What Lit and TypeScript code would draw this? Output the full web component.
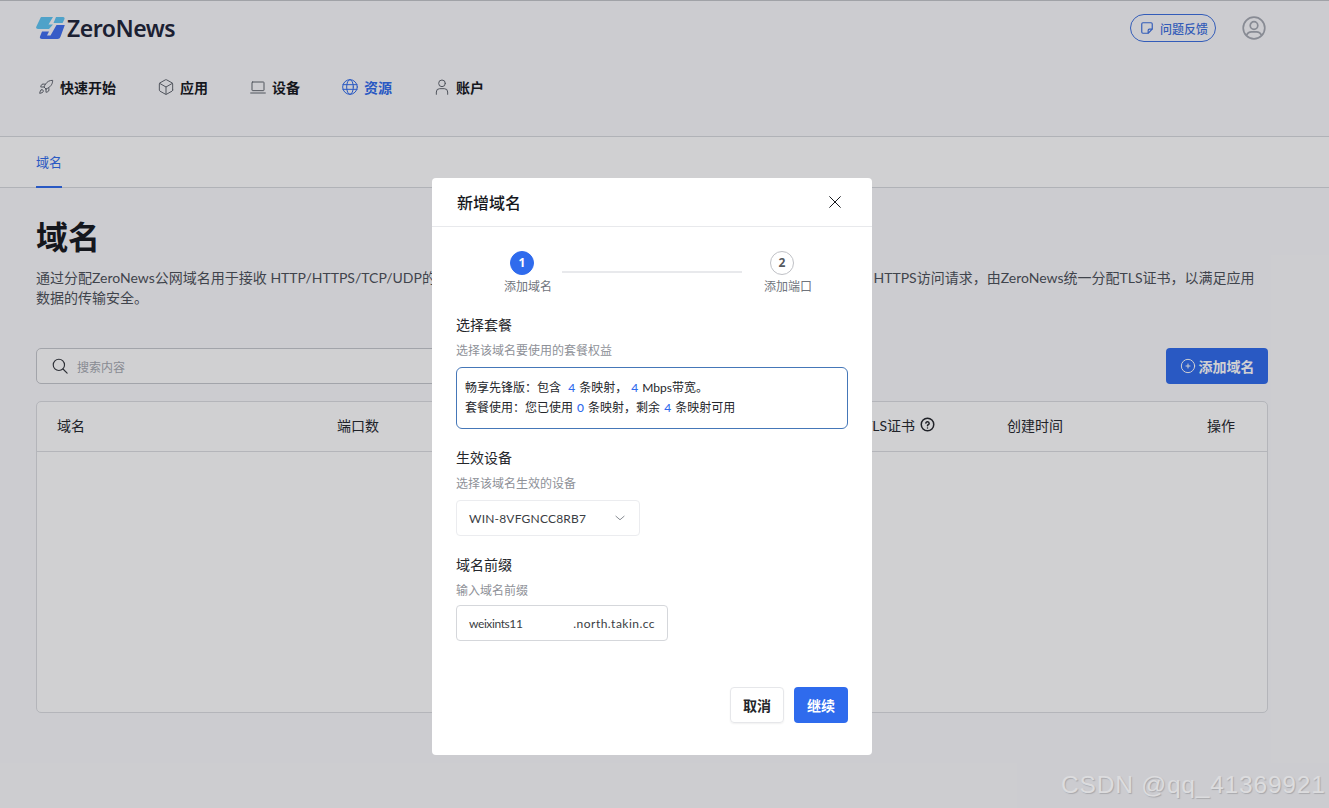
import { LitElement, html, css, svg } from "lit";
import { customElement } from "lit/decorators.js";

const icon = (size: number, body: unknown, cls = "") => html`<svg class=${cls} width=${size} height=${size} viewBox="0 0 24 24" fill="none" stroke="currentColor" stroke-width="1.5" stroke-linecap="round" stroke-linejoin="round">${body}</svg>`;

const rocket = svg`<path d="M4.5 16.5c-1.5 1.26-2 5-2 5s3.74-.5 5-2c.71-.84.7-2.13-.09-2.91a2.18 2.18 0 0 0-2.91-.09z"/><path d="m12 15-3-3a22 22 0 0 1 2-3.95A12.88 12.88 0 0 1 22 2c0 2.72-.78 7.5-6 11a22.35 22.35 0 0 1-4 2z"/><path d="M9 12H4s.55-3.03 2-4c1.62-1.08 5 0 5 0"/><path d="M12 15v5s3.03-.55 4-2c1.08-1.62 0-5 0-5"/>`;
const cube = svg`<path d="M22 16.5V7.5a2 2 0 0 0-1-1.73l-8-4.5a2 2 0 0 0-2 0l-8 4.5A2 2 0 0 0 2 7.5v9a2 2 0 0 0 1 1.73l8 4.5a2 2 0 0 0 2 0l8-4.5a2 2 0 0 0 1-1.73z"/><path d="M2.4 6.5 12 12l9.6-5.5"/><path d="M12 23V12"/>`;
const laptop = svg`<rect x="3" y="4.5" width="18" height="13" rx="1"/><path d="M1 21h22"/>`;
const globe = svg`<circle cx="12" cy="12" r="11"/><path d="M1.5 8.5h21M1.5 15.5h21"/><ellipse cx="12" cy="12" rx="5" ry="11"/>`;
const user = svg`<circle cx="12" cy="6.5" r="5"/><path d="M3.5 23v-3.5a5 5 0 0 1 5-5h7a5 5 0 0 1 5 5V23"/>`;

const nav = [
    { label: "快速开始", icon: rocket },
    { label: "应用", icon: cube },
    { label: "设备", icon: laptop },
    { label: "资源", icon: globe, active: true },
    { label: "账户", icon: user },
];

const columns = ["域名", "端口数", "生效设备", "TLS证书", "创建时间", "操作"];

@customElement("app-root")
class AppRoot extends LitElement {
    static styles = css`
        :host {
            display: block;
            position: relative;
            width: 1329px;
            height: 808px;
            overflow: hidden;
            background: #fbfbfd;
            color: #16181d;
            font-family: "Lato", "Noto Sans CJK SC", sans-serif;
        }
        header {
            border-top: 1px solid #c4c6ca;
            border-bottom: 1px solid #d8dade;
            height: 135px;
            padding: 0 0 0 36px;
            box-sizing: content-box;
        }
        .top {
            display: flex;
            align-items: center;
            justify-content: space-between;
            height: 54px;
            padding-right: 63px;
        }
        .logo {
            display: flex;
            align-items: center;
            gap: 2px;
            font-family: "Noto Sans", sans-serif;
            font-size: 23px;
            font-weight: 600;
            letter-spacing: -0.5px;
            color: #1d2438;
        }
        .tools {
            display: flex;
            align-items: center;
            gap: 26px;
        }
        .feedback {
            display: flex;
            align-items: center;
            gap: 6px;
            height: 26px;
            padding: 0 7px 0 9px;
            border: 1px solid #3b6fe0;
            border-radius: 14px;
            color: #3b6fe0;
            font-size: 12px;
            font-weight: 500;
        }
        .avatar {
            color: #a5a9b2;
        }
        nav {
            display: flex;
            gap: 42px;
            margin-top: 22px;
            padding-left: 2px;
        }
        .item {
            display: flex;
            align-items: center;
            gap: 6px;
            height: 20px;
            font-size: 14px;
            font-weight: 700;
        }
        .item svg {
            color: #5f646d;
        }
        .item.active,
        .item.active svg {
            color: #2f6bed;
        }
        .tabs {
            height: 50px;
            padding-left: 36px;
            background: #ffffff;
            border-bottom: 1px solid #d8dade;
        }
        .tab {
            display: inline-block;
            height: 49px;
            line-height: 50px;
            font-size: 13px;
            color: #2f6bed;
            border-bottom: 2px solid #2f6bed;
        }
        main {
            padding: 27px 0 0 36px;
            width: 1232px;
        }
        h1 {
            margin: 0;
            font-size: 32px;
            font-weight: 700;
            line-height: 44px;
        }
        .desc {
            margin: 9px 0 0;
            font-size: 14px;
            line-height: 20px;
            color: #4c5058;
        }
        .actions {
            display: flex;
            justify-content: space-between;
            margin-top: 40px;
        }
        .search {
            width: 560px;
            display: flex;
            align-items: center;
            gap: 8px;
            height: 34px;
            padding-left: 14px;
            background: #fff;
            border: 1px solid #c6c8cd;
            border-radius: 5px;
            font-size: 12px;
            color: #a6a9b0;
        }
        .search svg {
            color: #33363c;
        }
        .add {
            display: flex;
            align-items: center;
            justify-content: center;
            gap: 3px;
            width: 102px;
            height: 36px;
            background: #2f6bed;
            border-radius: 4px;
            color: #fff;
            font-size: 14px;
            font-weight: 700;
        }
        .table {
            margin-top: 17px;
            height: 310px;
            background: #fff;
            border: 1px solid #dcdee2;
            border-radius: 5px;
        }
        .thead {
            display: grid;
            grid-template-columns: 280px 265px 262px 143px 200px auto;
            align-items: center;
            height: 45px;
            padding: 0 0 4px 20px;
            border-bottom: 1px solid #dcdee2;
            font-size: 14px;
            color: #24262b;
        }
        .thead span {
            display: flex;
            align-items: center;
            gap: 5px;
        }
        .overlay {
            position: absolute;
            inset: 0;
            padding: 178px 25px 0 0;
            display: flex;
            justify-content: center;
            align-items: flex-start;
            background: rgba(20, 20, 30, 0.2);
        }
        .modal {
            width: 440px;
            height: 577px;
            box-sizing: border-box;
            background: #fff;
            border-radius: 4px;
        }
        .mhead {
            display: flex;
            align-items: center;
            justify-content: space-between;
            height: 48px;
            padding: 0 29px 0 25px;
            border-bottom: 1px solid #e8e9ec;
            font-size: 16px;
            font-weight: 500;
        }
        .mbody {
            padding: 0 24px;
        }
        .steps {
            display: grid;
            grid-template-columns: 48px 10px 180px 22px 48px;
            margin: 24px 0 0 48px;
            height: 46px;
        }
        .step {
            display: flex;
            flex-direction: column;
            align-items: center;
            font-size: 12px;
            line-height: 16px;
            color: #70747c;
            white-space: nowrap;
        }
        .dot {
            width: 24px;
            height: 24px;
            margin: 0 12px 4px 0;
            box-sizing: border-box;
            border-radius: 50%;
            border: 1px solid #bfc1c6;
            text-align: center;
            font-family: "Noto Sans", sans-serif;
            font-size: 12px;
            font-weight: 700;
            line-height: 22px;
            color: #55585e;
        }
        .dot.on {
            background: #2f6bed;
            border-color: #2f6bed;
            color: #fff;
        }
        .track {
            height: 2px;
            margin-top: 20px;
            background: #e8e9ec;
        }
        .label {
            font-size: 14px;
            line-height: 18px;
            color: #24262b;
        }
        .first {
            margin-top: 19px;
        }
        .hint {
            margin-top: 8px;
            font-size: 12px;
            line-height: 18px;
            color: #8e9198;
        }
        .plan {
            margin-top: 7px;
            height: 62px;
            box-sizing: border-box;
            padding: 10px 8px;
            border: 1px solid #4577b8;
            border-radius: 6px;
            font-size: 12px;
            line-height: 19.5px;
            color: #24262b;
        }
        .plan b {
            padding: 0 1px;
            font-weight: 500;
            color: #2f6bed;
        }
        .select,
        .input {
            display: flex;
            align-items: center;
            justify-content: space-between;
            height: 36px;
            box-sizing: border-box;
            padding: 0 12px;
            border-radius: 4px;
            font-size: 12px;
            color: #3a3d43;
        }
        .select {
            width: 184px;
            margin-top: 7px;
            border: 1px solid #ebecef;
            letter-spacing: 0.2px;
        }
        .select svg {
            color: #777b83;
        }
        .input {
            width: 212px;
            border: 1px solid #d5d7db;
            margin-top: 5px;
        }
        .prefix {
            letter-spacing: -0.4px;
        }
        .suffix {
            letter-spacing: 0.47px;
        }
        .gap1 {
            margin-top: 20px;
        }
        .gap2 {
            margin-top: 20px;
        }
        .foot {
            display: flex;
            justify-content: flex-end;
            gap: 10px;
            margin-top: 46px;
        }
        .btn {
            width: 54px;
            height: 36px;
            box-sizing: border-box;
            border-radius: 4px;
            display: flex;
            align-items: center;
            justify-content: center;
            font-size: 14px;
            font-weight: 700;
        }
        .btn.ghost {
            border: 1px solid #e6e7ea;
            box-shadow: 0 1px 2px rgba(0, 0, 0, 0.06);
            color: #24262b;
        }
        .btn.primary {
            background: #2f6bed;
            color: #fff;
        }
        .mark {
            position: absolute;
            left: 1061px;
            top: 771px;
            font-family: "Liberation Sans", sans-serif;
            font-size: 24.5px;
            letter-spacing: 0.8px;
            color: #dcdcde;
            text-shadow: 1px 1px 1px #a9a9ad;
            white-space: nowrap;
        }
    `;

    render() {
        return html`
            <header>
                <div class="top">
                    <div class="logo">
                        <svg width="29" height="22" viewBox="0 0 29 22">
                            <path d="M6 0H17L12.5 7.5H17L13 12H2C.4 12-.4 10.9.4 9.5L4.2 1.4C4.7.5 5 0 6 0z" fill="#5ec6f4" />
                            <path d="M20 0H27C28.4 0 29 1 28.4 2.2L26.6 6H17.5z" fill="#5ec6f4" />
                            <path d="M20.5 8H28.8L24.6 19.5C24 21.2 23 22 21.5 22H6C4.2 22 3.5 21 4 19.5L6 14.5H13L11 18.5H14.5z" fill="#3f6ff2" />
                        </svg>
                        ZeroNews
                    </div>
                    <div class="tools">
                        <div class="feedback">
                            <svg width="14" height="14" viewBox="0 0 24 24" fill="none" stroke="currentColor" stroke-width="2" stroke-linejoin="round"><path d="M5 3h14a2 2 0 0 1 2 2v9l-7 7H5a2 2 0 0 1-2-2V5a2 2 0 0 1 2-2z" /><path d="M21 14h-5a2 2 0 0 0-2 2v5" /></svg>
                            问题反馈
                        </div>
                        <svg class="avatar" width="24" height="24" viewBox="0 0 24 24" fill="none" stroke="currentColor" stroke-width="1.7"><circle cx="12" cy="12" r="10.8" /><circle cx="12" cy="9.5" r="3.8" /><path d="M4.5 19.5c1-2.5 3-3.6 5-3.6h5c2 0 4 1.1 5 3.6" /></svg>
                    </div>
                </div>
                <nav>
                    ${nav.map(
                        (n) => html`<div class="item ${n.active ? "active" : ""}">${icon(16, n.icon)}${n.label}</div>`
                    )}
                </nav>
            </header>
            <div class="tabs"><span class="tab">域名</span></div>
            <main>
                <h1>域名</h1>
                <p class="desc">
                    通过分配ZeroNews公网域名用于接收 HTTP/HTTPS/TCP/UDP的公网访问请求&#xFF0C;并将请求转发到指定的内网应用。绑定域名之后可启用 HTTPS访问请求&#xFF0C;由ZeroNews统一分配TLS证书&#xFF0C;以满足应用<br />数据的传输安全。
                </p>
                <div class="actions">
                    <div class="search">
                        ${icon(18, svg`<circle cx="10.5" cy="10.5" r="7.5" /><path d="m16 16 5.5 5.5" />`)}
                        搜索内容
                    </div>
                    <div class="add">
                        ${icon(16, svg`<circle cx="12" cy="12" r="10" /><path d="M12 9v6M9 12h6" />`)}
                        添加域名
                    </div>
                </div>
                <div class="table">
                    <div class="thead">
                        ${columns.map(
                            (c) => html`<span>${c}${c === "TLS证书"
                                ? html`<svg width="15" height="15" viewBox="0 0 24 24" fill="none" stroke="currentColor" stroke-width="2.4" stroke-linecap="round"><circle cx="12" cy="12" r="10" /><path d="M9.3 9.5a2.8 2.8 0 0 1 5.4.8c0 1.8-2.7 2.2-2.7 3.7" /><path d="M12 17.5v.1" /></svg>`
                                : ""}</span>`
                        )}
                    </div>
                </div>
            </main>
            <div class="overlay">
                <div class="modal">
                    <div class="mhead">
                        新增域名
                        ${icon(16, svg`<path d="M4 4l16 16M20 4 4 20" />`)}
                    </div>
                    <div class="mbody">
                        <div class="steps">
                            <div class="step"><div class="dot on">1</div><span>添加域名</span></div>
                            <div></div>
                            <div class="track"></div>
                            <div></div>
                            <div class="step"><div class="dot">2</div><span>添加端口</span></div>
                        </div>
                        <div class="label first">选择套餐</div>
                        <div class="hint">选择该域名要使用的套餐权益</div>
                        <div class="plan">
                            <div>畅享先锋版&#xFF1A;包含&nbsp; <b>4</b> 条映射&#xFF0C; <b>4</b> Mbps带宽。</div>
                            <div>套餐使用&#xFF1A;您已使用 <b>0</b> 条映射&#xFF0C;剩余 <b>4</b> 条映射可用</div>
                        </div>
                        <div class="label gap1">生效设备</div>
                        <div class="hint">选择该域名生效的设备</div>
                        <div class="select">
                            WIN-8VFGNCC8RB7
                            ${icon(14, svg`<path d="m5 9 7 6 7-6" />`)}
                        </div>
                        <div class="label gap2">域名前缀</div>
                        <div class="hint">输入域名前缀</div>
                        <div class="input"><span class="prefix">weixints11</span><span class="suffix">.north.takin.cc</span></div>
                        <div class="foot">
                            <div class="btn ghost">取消</div>
                            <div class="btn primary">继续</div>
                        </div>
                    </div>
                </div>
            </div>
            <div class="mark">CSDN @qq_41369921</div>
        `;
    }
}
